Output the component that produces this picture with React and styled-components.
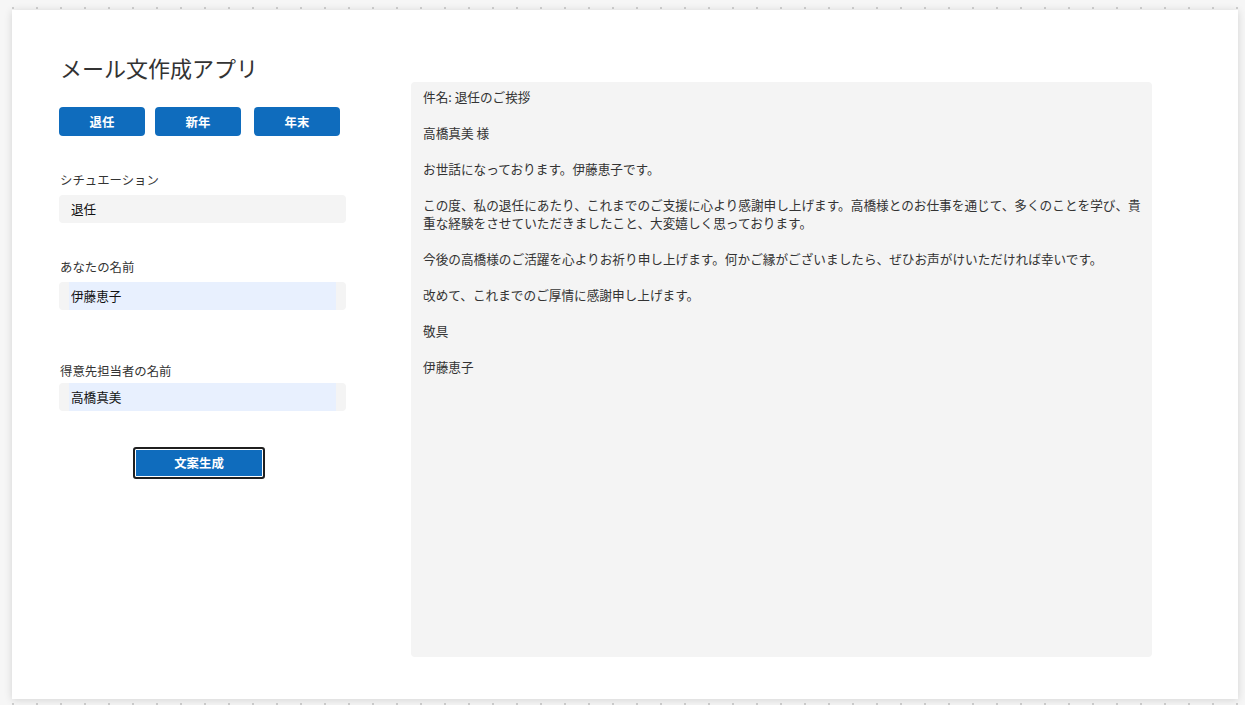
import React from "react";
import styled, { createGlobalStyle } from "styled-components";

const GlobalStyle = createGlobalStyle`
  html, body {
    margin: 0;
    padding: 0;
  }
  body {
    width: 1245px;
    height: 705px;
    overflow: hidden;
    background-color: #f6f6f6;
    background-image: radial-gradient(circle, #cfcfcf 1.1px, transparent 1.4px);
    background-size: 24px 24px;
    background-position: 1px -4px;
    font-family: "Noto Sans CJK JP", "Noto Sans", sans-serif;
    color: #333;
  }
`;

const Card = styled.div`
  box-sizing: border-box;
  width: 1226px;
  height: 689px;
  margin: 10px 0 0 12px;
  background: #fff;
  box-shadow: 0 1px 8px rgba(0, 0, 0, 0.14);
  display: flex;
  align-items: flex-start;
  padding-left: 47px;
  gap: 65px;
`;

const LeftColumn = styled.div`
  width: 287px;
  display: flex;
  flex-direction: column;
  align-items: flex-start;
`;

const Title = styled.h1`
  margin: 42px 0 0 1px;
  font-size: 22px;
  line-height: 30px;
  font-weight: 400;
  color: #333;
`;

const PresetRow = styled.div`
  display: flex;
  margin-top: 25px;
  gap: 10px;
`;

const PresetButton = styled.button`
  width: 86px;
  height: 29px;
  margin-left: ${(p) => p.$extra || 0}px;
  border: none;
  border-radius: 4px;
  background: #0f6cbd;
  color: #fff;
  font-family: inherit;
  font-size: 12.4px;
  font-weight: 700;
  cursor: pointer;
  padding: 0;
`;

const Label = styled.div`
  margin-top: ${(p) => p.$top}px;
  margin-left: 1px;
  font-size: 12.4px;
  line-height: 18px;
  color: #333;
`;

const Field = styled.div`
  box-sizing: border-box;
  width: 287px;
  height: 28px;
  margin-top: ${(p) => p.$top}px;
  padding: 0 10px;
  background: #f4f4f4;
  border-radius: 4px;
  display: flex;
`;

const FieldInput = styled.input`
  flex: 1;
  min-width: 0;
  box-sizing: border-box;
  height: 100%;
  border: none;
  outline: none;
  margin: 0;
  padding: 0 0 1px 2px;
  background: ${(p) => (p.$filled ? "#e8f0fe" : "transparent")};
  font-family: inherit;
  font-size: 12.6px;
  color: #111;
`;

const GenerateButton = styled.button`
  box-sizing: border-box;
  width: 132px;
  height: 32px;
  margin: 36px 0 0 74px;
  border: 2px solid #1f1f1f;
  border-radius: 3px;
  box-shadow: inset 0 0 0 1px #fff;
  background: #0f6cbd;
  color: #fff;
  font-family: inherit;
  font-size: 12.4px;
  font-weight: 700;
  padding: 0;
  cursor: pointer;
`;

const OutputPanel = styled.div`
  box-sizing: border-box;
  width: 741px;
  height: 575px;
  margin-top: 72px;
  padding: 6px 6px 6px 12px;
  background: #f4f4f4;
  border-radius: 4px;
  font-size: 12.65px;
  line-height: 18px;
  color: #333;
  white-space: pre-wrap;
  overflow: hidden;
`;

const emailText = `件名: 退任のご挨拶

高橋真美 様

お世話になっております。伊藤恵子です。

この度、私の退任にあたり、これまでのご支援に心より感謝申し上げます。高橋様とのお仕事を通じて、多くのことを学び、貴重な経験をさせていただきましたこと、大変嬉しく思っております。

今後の高橋様のご活躍を心よりお祈り申し上げます。何かご縁がございましたら、ぜひお声がけいただければ幸いです。

改めて、これまでのご厚情に感謝申し上げます。

敬具

伊藤恵子`;

export default function App() {
  return (
    <>
      <GlobalStyle />
      <Card>
        <LeftColumn>
          <Title>メール文作成アプリ</Title>
          <PresetRow>
            <PresetButton>退任</PresetButton>
            <PresetButton>新年</PresetButton>
            <PresetButton $extra={3}>年末</PresetButton>
          </PresetRow>

          <Label $top={35}>シチュエーション</Label>
          <Field $top={6}>
            <FieldInput defaultValue="退任" readOnly />
          </Field>

          <Label $top={35}>あなたの名前</Label>
          <Field $top={6}>
            <FieldInput $filled defaultValue="伊藤恵子" />
          </Field>

          <Label $top={52}>得意先担当者の名前</Label>
          <Field $top={3}>
            <FieldInput $filled defaultValue="高橋真美" />
          </Field>

          <GenerateButton>文案生成</GenerateButton>
        </LeftColumn>
        <OutputPanel>{emailText}</OutputPanel>
      </Card>
    </>
  );
}
